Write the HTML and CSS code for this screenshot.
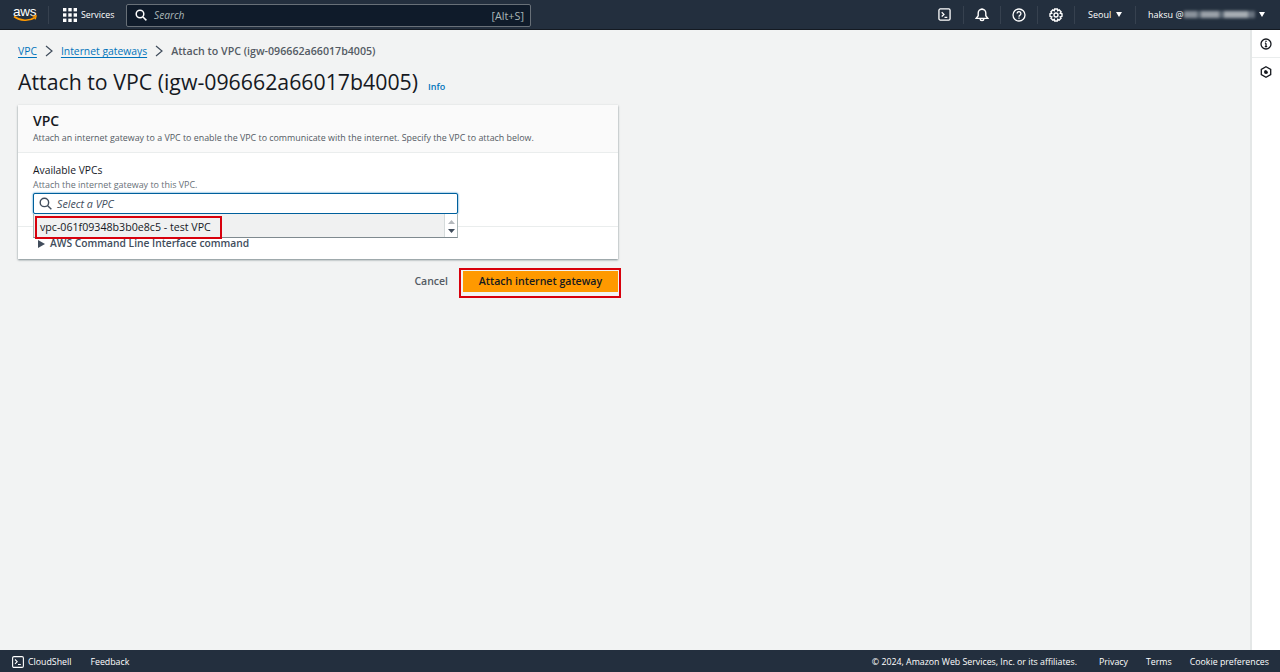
FILE: index.html
```html
<!DOCTYPE html>
<html lang="en">
<head>
<meta charset="utf-8">
<title>Attach to VPC</title>
<link rel="stylesheet" href="styles.css">
</head>
<body>
<div class="app">
  <header class="topbar">
    <div class="aws-logo">
      <span class="aws-word">aws</span>
      <svg class="aws-smile" width="24" height="8" viewBox="0 0 24 8"><path d="M1 1.5C7 6 16 6.5 22 2.5" fill="none" stroke="#f90" stroke-width="1.6"/><path d="M19.5 1.2l3.6-.2-.9 3.4" fill="none" stroke="#f90" stroke-width="1.3"/></svg>
    </div>
    <div class="services">
      <svg width="14" height="14" viewBox="0 0 14 14" fill="#fff"><rect x="0" y="0" width="3.4" height="3.4"/><rect x="5.3" y="0" width="3.4" height="3.4"/><rect x="10.6" y="0" width="3.4" height="3.4"/><rect x="0" y="5.3" width="3.4" height="3.4"/><rect x="5.3" y="5.3" width="3.4" height="3.4"/><rect x="10.6" y="5.3" width="3.4" height="3.4"/><rect x="0" y="10.6" width="3.4" height="3.4"/><rect x="5.3" y="10.6" width="3.4" height="3.4"/><rect x="10.6" y="10.6" width="3.4" height="3.4"/></svg>
      <span>Services</span>
    </div>
    <div class="searchbox">
      <svg width="12" height="12" viewBox="0 0 12 12" fill="none" stroke="#fff" stroke-width="1.5"><circle cx="5" cy="5" r="3.8"/><path d="M8 8l3.4 3.4"/></svg>
      <span class="search-ph">Search</span>
      <span class="search-key">[Alt+S]</span>
    </div>
    <div class="top-actions">
      <div class="top-item icon-item">
        <svg width="13" height="13" viewBox="0 0 14 14" fill="none" stroke="#fff" stroke-width="1.4"><rect x="1" y="1" width="12" height="12" rx="1.5"/><path d="M4 4.5l2.400 2.400L4 9.200M7 10h3"/></svg>
      </div>
      <div class="top-item icon-item">
        <svg width="14" height="14" viewBox="0 0 14 14" fill="none" stroke="#fff" stroke-width="1.4"><path d="M1.200 10.400h11.600L10.800 7.800V5a3.800 3.800 0 0 0-7.600 0v2.800z"/><path d="M5.200 10.800a1.800 1.800 0 0 0 3.600 0"/><path d="M7 .4v1"/></svg>
      </div>
      <div class="top-item icon-item">
        <svg width="14" height="14" viewBox="0 0 14 14" fill="none" stroke="#fff" stroke-width="1.3"><circle cx="7" cy="7" r="6"/><path d="M5.100 5.500a1.900 1.900 0 1 1 2.900 1.600c-.7.400-1 .8-1 1.600"/><path d="M7 9.600v1.200"/></svg>
      </div>
      <div class="top-item icon-item">
        <svg width="14" height="14" viewBox="0 0 14 14" fill="none" stroke="#fff" stroke-width="1.4"><circle cx="7" cy="7" r="2"/><path d="M5.700 1h2.600l.4 1.700 1.500-.8 1.900 1.900-.9 1.500 1.800.4v2.600l-1.800.5.900 1.400-1.900 1.900-1.500-.8-.4 1.700H5.700l-.4-1.700-1.500.8-1.900-1.900.9-1.400L1 8.300V5.700l1.800-.4-.9-1.500 1.900-1.900 1.500.8z"/></svg>
      </div>
      <div class="top-item region">
        <span>Seoul</span><i class="caret"></i>
      </div>
      <div class="top-item account">
        <span class="account-name">haksu @</span><span class="blurred"></span><i class="caret"></i>
      </div>
    </div>
  </header>

  <div class="middle">
    <main class="content">
      <nav class="crumbs">
        <a href="#">VPC</a>
        <svg width="8" height="12" viewBox="0 0 8 12" fill="none" stroke="#414d5c" stroke-width="1.2"><path d="M1 1l6 5-6 5"/></svg>
        <a href="#">Internet gateways</a>
        <svg width="8" height="12" viewBox="0 0 8 12" fill="none" stroke="#414d5c" stroke-width="1.2"><path d="M1 1l6 5-6 5"/></svg>
        <span class="crumb-current">Attach to VPC (igw-096662a66017b4005)</span>
      </nav>
      <div class="title-row">
        <h1>Attach to VPC (igw-096662a66017b4005)</h1>
        <a class="info" href="#">Info</a>
      </div>
      <section class="card">
        <div class="card-head">
          <h2>VPC</h2>
          <p>Attach an internet gateway to a VPC to enable the VPC to communicate with the internet. Specify the VPC to attach below.</p>
        </div>
        <div class="card-body">
          <div class="field-label">Available VPCs</div>
          <div class="field-desc">Attach the internet gateway to this VPC.</div>
          <div class="select-wrap">
            <div class="select-input">
              <svg width="13" height="13" viewBox="0 0 12 12" fill="none" stroke="#414d5c" stroke-width="1.3"><circle cx="5" cy="5" r="3.9"/><path d="M8 8l3.400 3.400"/></svg>
              <span>Select a VPC</span>
            </div>
            <div class="dropdown">
              <div class="option"><span class="option-mark">vpc-061f09348b3b0e8c5 - test VPC</span></div>
              <div class="scrollbar">
                <svg width="7" height="4" viewBox="0 0 7 4"><path d="M0 4l3.500-4 3.500 4z" fill="#b5b9bd"/></svg>
                <svg width="7" height="4" viewBox="0 0 7 4"><path d="M0 0l3.500 4 3.500-4z" fill="#414d5c"/></svg>
              </div>
            </div>
          </div>
        </div>
        <div class="card-foot">
          <svg width="7" height="8" viewBox="0 0 7 8"><path d="M0 0l7 4-7 4z" fill="#414d5c"/></svg>
          <span>AWS Command Line Interface command</span>
        </div>
      </section>
      <div class="actions">
        <span class="cancel">Cancel</span>
        <div class="attach-mark"><button class="attach">Attach internet gateway</button></div>
      </div>
    </main>
    <aside class="rail">
      <div class="rail-btn">
        <svg width="12" height="12" viewBox="0 0 12 12" fill="none" stroke="#16191f" stroke-width="1.3"><circle cx="6" cy="6" r="5"/><path d="M6 5.200v3.300M4.800 8.700h2.400M4.900 5.200H6M6 2.800v1.300"/></svg>
      </div>
      <div class="rail-btn">
        <svg width="12" height="12" viewBox="0 0 12 12" fill="none" stroke="#16191f" stroke-width="1.300"><path d="M6 .8l4.700 2.600v5.200L6 11.200 1.300 8.600V3.400z"/><path d="M4 6a2 2 0 0 1 2-2l2 2a2 2 0 0 1-4 0z" fill="#16191f" stroke="none"/></svg>
      </div>
    </aside>
  </div>

  <footer class="bottombar">
    <div class="cloudshell">
      <svg width="12" height="12" viewBox="0 0 12 12" fill="none" stroke="#fff" stroke-width="1.100"><rect x=".6" y=".6" width="10.800" height="10.800" rx="1.400"/><path d="M3 3.500l2.200 2.200L3 7.900M6 8.500h2.800"/></svg>
      <span>CloudShell</span>
    </div>
    <span class="feedback">Feedback</span>
    <div class="foot-right">
      <span class="copy">© 2024, Amazon Web Services, Inc. or its affiliates.</span>
      <span>Privacy</span>
      <span>Terms</span>
      <span>Cookie preferences</span>
    </div>
  </footer>
</div>
</body>
</html>
```

FILE: styles.css
```css
* { box-sizing: border-box; }
html, body { margin: 0; height: 100%; }
body { font-family: "Open Sans", "Noto Sans", "Liberation Sans", sans-serif; color: #16191f; background: #f2f3f3; }
.app { width: 1280px; height: 672px; display: flex; flex-direction: column; overflow: hidden; }

.topbar { height: 30px; flex: none; display: flex; align-items: center; background: #232f3e; border-bottom: 1px solid #141a22; color: #fff; font-size: 9px; }
.aws-logo { width: 48px; padding-left: 13px; height: 29px; position: relative; }
.aws-word { display: block; font-family: "Liberation Sans", sans-serif; font-size: 13.5px; line-height: 13px; padding-top: 5px; letter-spacing: -.2px; }
.aws-smile { position: absolute; left: 13px; top: 15px; }
.services { width: 78px; padding-left: 14px; display: flex; align-items: center; gap: 4px; height: 18px; border-left: 1px solid #36414f; font-size: 8.8px; }
.searchbox { width: 405px; height: 23px; margin-top: 1px; display: flex; align-items: center; padding: 0 6px 0 8px; background: #0f1b2a; border: 1px solid #687078; border-radius: 2px; gap: 7px; }
.search-ph { font-style: italic; color: #aab7b8; font-size: 10.2px; }
.search-key { margin-left: auto; color: #aab7b8; font-size: 10.8px; }
.top-actions { margin-left: auto; display: flex; align-items: center; height: 18px; }
.top-item { height: 18px; display: flex; align-items: center; }
.icon-item { width: 37px; justify-content: center; }
.icon-item + .icon-item { border-left: 1px solid #36414f; }
.region { width: 61px; padding-left: 13px; gap: 2px; border-left: 1px solid #36414f; }
.account { width: 145px; padding: 0 5px 0 12px; gap: 1px; border-left: 1px solid #36414f; }
.account-name { flex: none; white-space: nowrap; }
.blurred { flex: none; width: 71px; height: 7px; filter: blur(1.5px); background: linear-gradient(90deg, #8a929b 0 18%, #5b6672 18% 24%, #9aa1a8 24% 50%, #5b6672 50% 56%, #a7adb3 56% 90%, #6a7480 90%); }
.caret { flex: none; width: 0; height: 0; margin-left: 3px; border-left: 3.5px solid transparent; border-right: 3.5px solid transparent; border-top: 5px solid #fff; }

.middle { flex: 1; min-height: 0; display: flex; }
.content { flex: 1; padding: 12px 0 0 18px; }
.rail { width: 30px; flex: none; background: #fff; border-left: 2px solid #e4e7e7; }
.rail-btn { height: 28px; display: flex; align-items: center; justify-content: center; border-bottom: 1px solid #eaeded; }
.rail-btn + .rail-btn { border-bottom: 0; }

.crumbs { height: 18px; display: flex; align-items: center; gap: 8px; font-size: 10.35px; }
.crumbs a { color: #0073bb; text-decoration: underline; text-underline-offset: 2px; }
.crumb-current { color: #545b64; font-weight: 600; font-size: 10.65px; }
.title-row { display: flex; align-items: baseline; margin-top: 9px; height: 26px; }
h1 { margin: 0; font-size: 21.3px; line-height: 26px; font-weight: 400; color: #16191f; }
.info { margin-left: 10px; color: #0073bb; font-size: 9px; font-weight: 600; text-decoration: none; }

.card { width: 600px; height: 154px; margin-top: 10px; background: #fff; box-shadow: 0 1px 2px rgba(0,28,36,.5); display: flex; flex-direction: column; }
.card-head { height: 48px; padding: 7px 15px 0; background: #fafafa; border-bottom: 1px solid #eaeded; }
h2 { margin: 0; font-size: 14px; line-height: 17px; font-weight: 600; color: #16191f; }
.card-head p { margin: 3px 0 0; font-size: 8.88px; line-height: 13px; color: #545b64; }
.card-body { height: 74px; padding: 10px 15px 0; border-bottom: 1px solid #eaeded; }
.field-label { font-size: 10.3px; line-height: 14px; color: #16191f; }
.field-desc { font-size: 8.95px; line-height: 14px; color: #687078; margin-top: 1px; }
.select-wrap { position: relative; width: 425px; margin-top: 1px; }
.select-input { height: 21px; display: flex; align-items: center; gap: 5px; padding-left: 5px; background: #fff; border: 1px solid #00609c; border-radius: 2px; font-size: 10.7px; font-style: italic; color: #414d5c; box-shadow: 0 0 2px #0073bb; }
.dropdown { position: absolute; left: 0; top: 21px; width: 425px; height: 24px; display: flex; background: #f0f1f1; border: 1px solid #aab7b8; border-top: 0; border-bottom: 1px solid #7f8a8f; }
.option { flex: 1; }
.option-mark { display: inline-flex; align-items: center; height: 23px; padding: 0 9px 0 3px; margin-left: 1px; border: 2px solid #d8000c; font-size: 10.65px; color: #16191f; }
.scrollbar { width: 13px; background: #fff; border-left: 1px solid #d5dbdb; display: flex; flex-direction: column; align-items: center; justify-content: space-around; padding: 3px 0 2px; }
.card-foot { height: 32px; padding: 10px 0 0 20px; display: flex; align-items: flex-start; gap: 5px; font-size: 10.25px; line-height: 13px; font-weight: 600; color: #414d5c; }
.card-foot svg { margin-top: 3px; }

.actions { width: 603px; height: 30px; margin-top: 9px; display: flex; align-items: flex-start; justify-content: flex-end; gap: 11px; }
.cancel { margin-top: 5px; font-size: 10.5px; line-height: 16px; font-weight: 600; color: #545b64; }
.attach-mark { padding: 1px 1px 4px 2px; border: 2px solid #d8000c; background: #f2f3f3; }
.attach { display: block; width: 155px; height: 21px; padding: 0 0 2px; border: 0; background: #ff9900; font-family: inherit; font-size: 10.6px; font-weight: 600; color: #16191f; }

.bottombar { height: 22px; flex: none; display: flex; align-items: center; background: #232f3e; color: #fff; font-size: 8.8px; padding: 1px 11px 0 12px; }
.cloudshell { display: flex; align-items: center; gap: 4px; }
.feedback { margin-left: 19px; }
.foot-right { margin-left: auto; display: flex; gap: 18px; }
.copy { margin-right: 4px; }
```
